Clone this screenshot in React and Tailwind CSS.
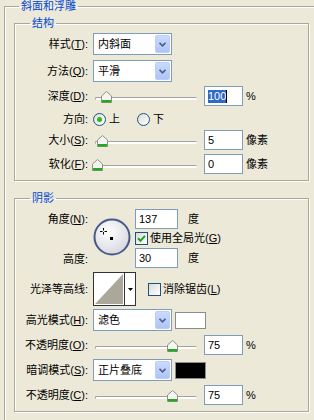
import React from 'react'

function Group({ title, legendClass, className, children }) {
  return (
    <fieldset className={`border border-[#aca899] shadow-[inset_1px_1px_0_#fff,1px_1px_0_#fff] ${className}`}>
      <legend className={`px-[2px] leading-[12px] text-[#0046d5] ${legendClass}`}>{title}</legend>
      {children}
    </fieldset>
  )
}

const Label = ({ children }) => (
  <span className="w-[73px] shrink-0 whitespace-nowrap text-right">{children}</span>
)

function Combo({ value }) {
  return (
    <div className="ml-[5px] flex h-[22px] w-[79px] shrink-0 items-center border border-[#7f9db9] bg-white">
      <span className="flex-1 pl-[4px]">{value}</span>
      <span className="mr-[1px] flex h-[18px] w-[15px] items-center justify-center rounded-[2px] border border-[#bccdf9] bg-gradient-to-b from-[#cbdafd] to-[#afc4f7]">
        <svg width="7" height="5" viewBox="0 0 7 5">
          <path d="M0.5 0.8 L3.5 3.8 L6.5 0.8" stroke="#4d6185" strokeWidth="1.7" fill="none" />
        </svg>
      </span>
    </div>
  )
}

function Slider({ value }) {
  return (
    <div className="relative ml-[4px] h-[20px] w-[108px] shrink-0">
      <div className="absolute left-[3px] right-[3px] top-[11px] h-[3px] rounded-[2px] border-t border-l border-[#a3a29c] bg-white" />
      <svg className="absolute top-[5px]" style={{ left: value }} width="11" height="12" viewBox="0 0 11 12">
        <path d="M0.5 5 L5.5 0.5 L10.5 5 L10.5 11.5 L0.5 11.5 Z" fill="#f4f4f0" stroke="#8f8f8a" />
        <rect x="1" y="9" width="9" height="2.5" fill="#25a825" />
      </svg>
    </div>
  )
}

function Field({ children, w = 'w-[39px]', className = '' }) {
  return (
    <span className={`flex h-[20px] shrink-0 items-center border border-[#7f9db9] bg-white pl-[3px] ${w} ${className}`}>
      {children}
    </span>
  )
}

function Radio({ on }) {
  return (
    <span className="flex h-[13px] w-[13px] shrink-0 items-center justify-center rounded-full border border-[#1c5180] bg-gradient-to-br from-[#dcdcd6] to-white">
      {on && <span className="h-[5px] w-[5px] rounded-full bg-[#2cb82c]" />}
    </span>
  )
}

function Check({ on }) {
  return (
    <span className="flex h-[13px] w-[13px] shrink-0 items-center justify-center border border-[#1c5180] bg-gradient-to-br from-[#dcdcd6] to-white">
      {on && (
        <svg width="9" height="9" viewBox="0 0 9 9">
          <path d="M1 4.2 L3.5 6.8 L8 1.8" stroke="#21a121" strokeWidth="2" fill="none" />
        </svg>
      )}
    </span>
  )
}

function Dial() {
  return (
    <svg className="ml-[5px] mt-[9px] shrink-0" width="38" height="38" viewBox="0 0 38 38">
      <defs>
        <radialGradient id="dialfill" cx="40%" cy="35%" r="70%">
          <stop offset="0" stopColor="#ffffff" />
          <stop offset="1" stopColor="#d6d6de" />
        </radialGradient>
      </defs>
      <circle cx="19" cy="19" r="17.5" fill="url(#dialfill)" stroke="#485a8c" strokeWidth="2" />
      <path d="M10.5 10v2.5M10.5 14v2.5M7 13.5h2.5M11.5 13.5h2.5" stroke="#000" strokeWidth="1" />
      <rect x="17" y="19" width="3" height="3" fill="#000" />
    </svg>
  )
}

function Contour() {
  return (
    <div className="ml-[5px] flex h-[34px] w-[43px] shrink-0 border border-[#333] bg-white">
      <div className="p-[1px]">
        <svg width="28" height="30" viewBox="0 0 28 30">
          <polygon points="0,30 28,0 28,30" fill="#aca899" />
        </svg>
      </div>
      <div className="flex flex-1 items-center justify-center border-l border-[#333]">
        <svg width="5" height="3" viewBox="0 0 5 3">
          <polygon points="0,0 5,0 2.5,3" fill="#000" />
        </svg>
      </div>
    </div>
  )
}

export default function App() {
  return (
    <div className="h-[420px] w-[314px] overflow-hidden bg-[#ece9d8] font-['Liberation_Sans','Noto_Sans_CJK_SC',sans-serif] text-[11px] leading-[13px] text-black">
      <Group title="斜面和浮雕" legendClass="ml-[14px]" className="ml-[4px] w-[330px] pb-[30px]">
        <Group title="结构" legendClass="ml-[15px]" className="ml-[9px] mt-[5px] w-[295px] pb-[6px]">
          <div className="mt-[4px] flex items-center">
            <Label>样式(<u>T</u>):</Label>
            <Combo value="内斜面" />
          </div>
          <div className="mt-[5px] flex items-center">
            <Label>方法(<u>Q</u>):</Label>
            <Combo value="平滑" />
          </div>
          <div className="mt-[4px] flex h-[20px] items-center">
            <Label>深度(<u>D</u>):</Label>
            <Slider value={9} />
            <Field className="ml-[4px]">
              <span className="bg-[#316ac5] text-white">100</span>
              <span className="h-[13px] w-[1px] bg-black" />
            </Field>
            <span className="ml-[3px]">%</span>
          </div>
          <div className="mt-[6px] flex h-[14px] items-center">
            <Label>方向:</Label>
            <span className="ml-[5px]"><Radio on /></span>
            <span className="ml-[3px]">上</span>
            <span className="ml-[17px]"><Radio /></span>
            <span className="ml-[3px]">下</span>
          </div>
          <div className="mt-[4px] flex h-[20px] items-center">
            <Label>大小(<u>S</u>):</Label>
            <Slider value={5} />
            <Field className="ml-[4px]">5</Field>
            <span className="ml-[3px]">像素</span>
          </div>
          <div className="mt-[4px] flex h-[20px] items-center">
            <Label>软化(<u>F</u>):</Label>
            <Slider value={0} />
            <Field className="ml-[4px]">0</Field>
            <span className="ml-[3px]">像素</span>
          </div>
        </Group>

        <Group title="阴影" legendClass="ml-[15px]" className="ml-[9px] mt-[11px] w-[295px] pb-[6px]">
          <div className="mt-[5px] flex">
            <div className="flex h-[60px] w-[73px] shrink-0 flex-col justify-between text-right">
              <span className="flex h-[20px] items-center justify-end">角度(<u>N</u>):</span>
              <span className="flex h-[20px] items-center justify-end">高度:</span>
            </div>
            <Dial />
            <div className="ml-[4px] flex flex-col">
              <div className="flex items-center">
                <Field w="w-[43px]">137</Field>
                <span className="ml-[10px]">度</span>
              </div>
              <div className="mt-[3px] flex h-[13px] items-center">
                <Check on />
                <span className="ml-[2px] whitespace-nowrap">使用全局光(<u>G</u>)</span>
              </div>
              <div className="mt-[3px] flex items-center">
                <Field w="w-[43px]">30</Field>
                <span className="ml-[10px]">度</span>
              </div>
            </div>
          </div>
          <div className="mt-[3px] flex items-center">
            <Label>光泽等高线:</Label>
            <Contour />
            <span className="ml-[12px]"><Check /></span>
            <span className="ml-[2px]">消除锯齿(<u>L</u>)</span>
          </div>
          <div className="mt-[3px] flex items-center">
            <Label>高光模式(<u>H</u>):</Label>
            <Combo value="滤色" />
            <span className="ml-[3px] h-[17px] w-[31px] border border-[#8c8c8c] bg-white" />
          </div>
          <div className="mt-[4px] flex h-[20px] items-center">
            <Label>不透明度(<u>O</u>):</Label>
            <Slider value={75} />
            <Field className="ml-[4px]">75</Field>
            <span className="ml-[3px]">%</span>
          </div>
          <div className="mt-[4px] flex items-center">
            <Label>暗调模式(<u>S</u>):</Label>
            <Combo value="正片叠底" />
            <span className="ml-[3px] h-[17px] w-[31px] border border-[#8c8c8c] bg-black" />
          </div>
          <div className="mt-[4px] flex h-[20px] items-center">
            <Label>不透明度(<u>C</u>):</Label>
            <Slider value={75} />
            <Field className="ml-[4px]">75</Field>
            <span className="ml-[3px]">%</span>
          </div>
        </Group>
      </Group>
    </div>
  )
}
